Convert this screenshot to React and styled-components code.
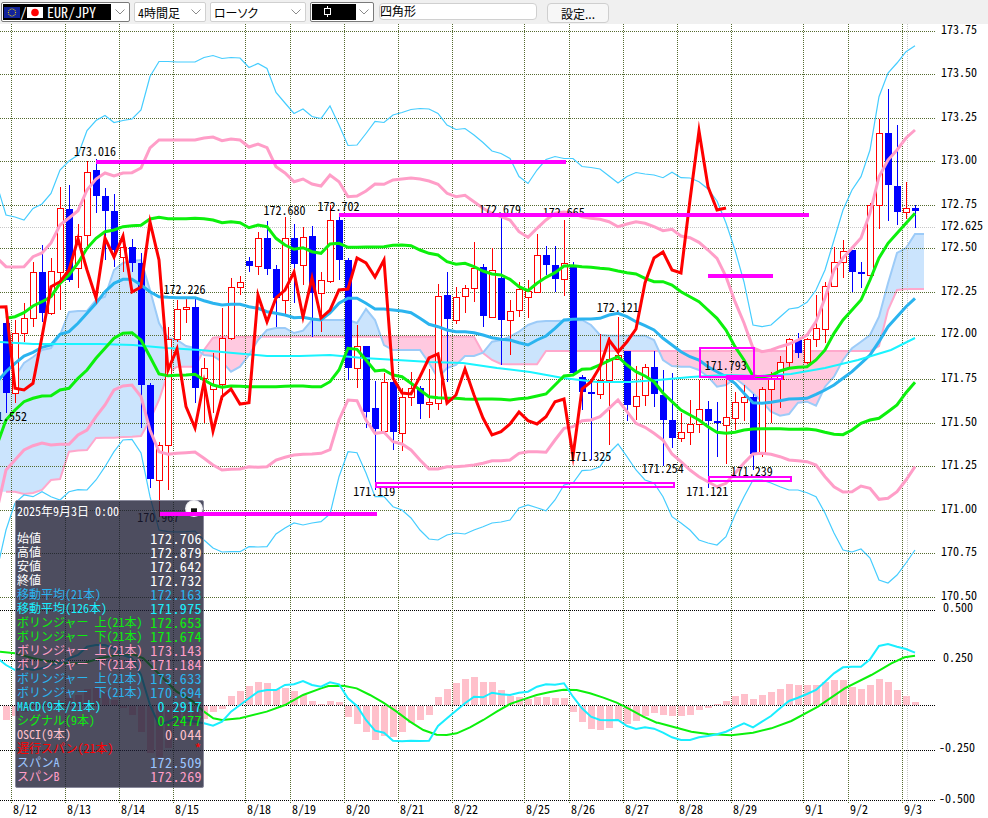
import React from 'react';
import styled, { createGlobalStyle } from 'styled-components';

const GOTHIC = `"Noto Sans CJK JP", "Liberation Sans", sans-serif`;

const Global = createGlobalStyle`
  html, body { margin: 0; padding: 0; background: #fff; }
  body { font-family: ${GOTHIC}; font-feature-settings: "hwid"; overflow: hidden; }
`;

const Page = styled.div`
  width: 988px; height: 818px; display: flex; flex-direction: column; background: #fff; overflow: hidden;
`;
const Toolbar = styled.div`
  height: 24px; flex: none; background: #f0f0f0; display: flex; align-items: flex-start;
  padding: 2px 0 0 1px; box-sizing: border-box; gap: 4px;
`;
const Select = styled.div`
  width: ${p => p.$w}px; height: 20px; box-sizing: border-box; background: #fff;
  border: 1px solid ${p => (p.$dark ? '#7a7a7a' : '#d0d0d0')}; border-radius: 2px;
  display: flex; align-items: center; padding: 1px 0 1px ${p => (p.$dark ? 1 : 3)}px; font-size: 12px; color: #000; position: relative;
  font-feature-settings: ${p => (p.$palt ? '"palt"' : '"hwid"')};
`;
const DarkBox = styled.div`
  width: ${p => p.$w}px; height: 16px; background: #000; color: #fff; display: flex; align-items: center; flex: none;
`;
const Chevron = styled.svg`
  position: absolute; right: 4px; top: 6px; width: 10px; height: 6px;
`;
const PairText = styled.span`
  font-size: 14px; line-height: 16px; margin-left: 4px; letter-spacing: 0;
`;
const Slash = styled.span`
  font-size: 13px; line-height: 16px; width: 7px; text-align: center;
`;
const Flag = styled.svg`
  width: 16px; height: 11px; margin-left: ${p => p.$ml || 0}px; flex: none;
`;
const ToolInput = styled.div`
  width: 158px; height: 17px; margin: 1px 0 0 1px; box-sizing: border-box; background: #fff; border: 1px solid #d0d0d0;
  border-radius: 4px; font-size: 12px; line-height: 14px; padding-left: 0; color: #000;
`;
const ToolButton = styled.div`
  width: 62px; height: 20px; margin: 1px 0 0 6px; box-sizing: border-box; background: #f7f7f7; border: 1px solid #cfcfcf;
  border-radius: 4px; font-size: 12px; line-height: 20px; text-align: center; color: #000; font-feature-settings: "palt";
`;
const ChartArea = styled.div`
  position: relative; flex: 1;
`;
const ChartSvg = styled.svg`
  display: block; width: 988px; height: 794px; overflow: visible;
`;
const ObjectSvg = styled.svg`
  position: absolute; left: 0; top: 0; width: 988px; height: 794px; pointer-events: none;
`;
const ChartLabel = styled.text`
  font-family: ${GOTHIC}; font-size: 12px; font-feature-settings: "hwid"; fill: #000; dominant-baseline: central;
`;
const InfoPanel = styled.div`
  position: absolute; left: 15px; top: 476px; width: 189px; height: 288px; box-sizing: border-box;
  background: rgba(27, 27, 50, 0.78); border: 1px solid #8a8a9c; border-radius: 2px; padding: 3px 1px 0 1px;
  display: flex; flex-direction: column; color: #fff;
`;
const DateRow = styled.div`
  height: 14px; line-height: 14px; font-size: 12px; margin-bottom: 13px; white-space: pre;
`;
const InfoRow = styled.div`
  height: 14px; display: flex; justify-content: space-between; align-items: center; color: ${p => p.$c}; white-space: pre;
`;
const InfoName = styled.span`
  font-size: 12px; line-height: 14px;
`;
const InfoValue = styled.span`
  font-size: 14px; line-height: 14px; letter-spacing: 0.4px; color: ${p => p.$c || 'inherit'};
`;
const CloseButton = styled.div`
  position: absolute; right: 0px; top: -1px; width: 18px; height: 17px; border-radius: 50%;
  background: radial-gradient(circle, #ffffff 55%, #d8d8e4 80%, #8a8a9c 100%);
  display: flex; align-items: flex-end; justify-content: center;
`;
const CloseDash = styled.div`
  width: 6px; height: 3px; background: #111; margin-bottom: 5px; box-shadow: 0 -1px 0 #555;
`;

const X = i => 6 + 9 * i;

const upper3 = [215,217,220,208.5,204,193.5,170,161,155,130.5,120.5,115.5,122.5,120.5,119,110,76.5,61.5,61.5,62,62,62,57.5,55.5,58.5,57.5,58,67.5,63.5,68.5,92.5,103,113.5,109,116.5,118.5,106,125,145.5,145,133.5,121.5,122.5,115,112.5,109.5,108.5,109,113.5,125,129.5,128.5,135,142.5,151,153.5,158.5,176.5,183.5,170,159.5,156.5,158.5,158.5,166.5,167.5,169,176,183,176.5,172.5,174,175,177.7,172.3,177.7,178,181.7,189,201,223,250,282,325,326.7,325,317,309,307.7,302.3,290,270,240,210,190,176.7,150,96.7,73,63,51.7,45.7];
const lower3 = [530,503,495,496.7,491.7,496.7,500,491.7,489.7,490,480,466.7,451.7,440,439.3,453,496.7,530,531.7,532,531.7,531,540,548,552,551.7,551.7,546.7,547,546.7,534,528,523,525,523,521.7,514,476.7,451.7,452.7,473,496.7,496.7,506.7,510,518,530,539,540,535,533,534,530,526.7,523,522,520,508,505,507.7,510.7,500,485,483,470.7,470,466.7,453,444,456.7,470,480,483,496.7,516.7,523,530,540,543,545,536.7,515,496.7,480,480,483,486.7,490,490,492.7,496.7,513,533,550,552,549,558,580,583,575,563,550];
const upper2 = [266.7,267,266.7,256.7,253,243,225,218,210.7,190,179,173,176,173,172.7,168,148,140,140,140,140,140,138,137,140.7,139,140,147,144,147.7,166.7,173,181.7,179,184,186,175,181.7,196.7,196,191,184,184.3,180,179,178,179,181,184.3,193.3,196.7,195.3,201.7,208.3,213.3,216.7,220,231.7,237.3,228.3,220,213.3,212,213.3,216.7,218.3,219.3,221.7,226.7,224,221.7,223.3,226.7,230.7,229.3,236,237.7,242.3,250,258.3,276.7,301.7,323,348,351.7,350,346.7,344,340,335,321.7,298,270,258,248,238,213,176.7,160,150,138,130];
const lower2 = [470,460,450,445.7,443,445,444.3,444.3,435,430,416.7,405,390,386,385,396.7,430,451.7,454.3,453.3,452.7,452,458.3,465,470,469.3,469,466.7,467.3,466.7,460,457.3,455,454.3,454,453.3,449.7,420,400,400.7,420,433.3,432.3,441.7,444,450,460,469,469,466.7,466.7,466,465,463.3,460.7,460.7,460,453.3,451.7,451.7,452.3,440,428.3,426.7,420.7,420,416.7,408.3,400,411.7,423.3,427.3,433.3,440,454,461.7,470,476.7,481.7,486.7,483.3,473.3,463,454,453.3,454.3,456.7,460,460.7,461.7,465,476.7,486.7,492,491.7,486,488.3,499.3,498.3,491.7,480,466.7];
const upper1 = [318.3,316.7,312.7,306,301.7,296.7,283.3,275,263,248.3,238.3,231.7,230,226.7,225.7,225.3,219,217.3,218.7,218.7,218.7,218.3,218.7,220,222.7,221.7,222.7,227.7,225,226.7,238.3,245,249.3,247.7,251.7,253.3,244,243.3,247.3,247.3,247,247,246.7,245.3,245,245.7,250,253.3,255,261.7,264.3,263.3,266.7,271,274,275,279.3,286.7,290.7,283.3,277.3,272.7,266,265.7,266.7,267.3,268.3,269,271,272.7,274,278.3,281.7,281.7,285,291.7,296.7,301.7,310,318.3,330,346.7,360,376,377,375.5,371,368.3,367.3,366.7,360,350,333.3,320,310,300,280,258,243.3,233.3,223.3,213.3];
const lower1 = [420,410,401.7,398.3,396,395.7,390,388.3,378.3,370,358.3,348.3,338.3,333.3,332.7,340,356.7,374,375.7,375.3,375,374.3,380,385,387.3,386,386.3,386.7,386.7,386.7,386.7,386.3,386,386,386.7,386.7,381.7,370,348.3,349.3,360,371,370,375,376.7,383.3,390,396.7,397.7,398.3,398.3,399,399.3,399,399,399.3,400,398.7,398,396,394,385,376,375,369.3,368.7,365,360.7,356.7,365,371.7,376,381.7,393,401.7,410,415,420,426.7,432.3,433.3,432.3,430,429,428.7,428.7,428.7,429.3,429.3,429,430,432.3,434.3,434.7,430,423.3,420,418.3,411.7,405,392.7,382.3];
const ma21 = [371.7,363.3,356,352.3,347.3,345,334.3,331.7,323.3,313.3,303.3,291.7,283.3,279.3,279.3,285,291.7,296.7,297.3,297.7,297.7,297.7,300.7,303.3,305,304.3,304.3,306.7,308.3,311.7,313.3,315,317.7,317.3,319,320,313,303.3,298.3,298.3,303.3,309,309,310,311,312.7,318.3,324.3,326.7,330,331.7,331.7,332.7,335,337.7,339.3,340,342.7,345,340,336,328.3,320,319.3,319,319,318.3,315,313.3,316.7,321.7,325.7,330,338.3,345,351.7,356.7,360,366.7,371.7,376.7,383.3,393.3,402.7,403.3,402.3,400.7,399,398.7,398.3,394.3,390,385,378.3,371.7,363.3,355,341.7,326.7,316.7,306.7,298.3];
const chikou = [306.7,388.3,390,383.3,336.7,286.7,281.7,270,239,270,298,238,257,236,292,287,222,260,370,349,406.7,428,382,431,396.7,389,404,402.7,295,321.7,298,290,272,317,278,318,310,290,289,258,263,277,260,378,393,394,376.7,358,354,403,395,369,395,418,435,431.7,424,412,420.7,424,416.7,401.7,399,456,389,381.7,366.7,340,352,341.7,329,283,258,252,270,273,200,131,186.7,210,208];
const macd = [665,670,668.3,670,668.3,665,663.3,658.3,655,646.7,645,645,648.3,655,658.3,675,705,725,721.7,718.3,720,721.7,723.3,725.7,721.7,711.7,705,698.3,691.7,690,690,685,684.3,681,685,686.7,682.3,684.3,698.3,706,720,730.7,732.7,740.7,741.3,740.7,741,740.7,726,718.3,710.7,703.3,696.7,697.3,692.7,694.3,695,692.7,691.7,686.7,684.3,684.7,683.3,696.7,708.3,716.7,720,720.3,720,726,729,727.3,728.7,732.7,737.3,740,740,737.3,736,734.3,731.7,727.3,723.3,727.3,721.7,716,708.3,701,697.7,694,690,681.7,673.3,667.3,666.7,666.7,659.3,646,644,646.7,649,652.7];
const osc = [-14,-10,-6,-2,2,4,4,7,10,16,17,13,5,-2,-9,-26,-47,-51,-42,-20,-19,-19,-13,-6,-3,9,14,19,23,22,16,17,14,10,4,1,4,3,-11,-18,-26,-34,-30,-31,-26,-17,-14,-9,8,16,22,26,28,23,23,15,9,8,6,8,8,7,7,-6,-16,-23,-24,-22,-15,-18,-15,-10,-7,-9,-10,-10,-9,-4,-2,1,4,9,11,6,10,13,16,21,20,20,20,23,25,25,18,16,20,26,23,15,9,3];
const spanA = [380,376.7,363,357,350,348,335,312,311,311,300,296.7,270,263,261,260,290,323,338,340,346,348,355,356,361.7,371.7,366.7,355,340,330,328,328,333,330.7,320,320,320,320,320,323,309,320,345,350,350,350,350,363,378,368,365,356,356,352.7,341.7,340,336.7,331.7,325,321.7,321,321,320.7,320.5,320,325,335,335.7,335.7,335.7,335.7,335.7,340,360,366,366.7,366.7,370,376.7,386.7,385,378.3,385,393.3,401.7,411.7,415.7,414,402.7,401.7,405.7,386.7,376.7,360,348.3,341.7,335,316.7,283.3,253,248,234,234];
const spanB = [491.7,491.7,494,493,490,480,479,451.7,450.5,450,438,437.7,437.7,437,436.7,436,420,400,373,366.7,366.7,366.7,350,337.7,...Array(29).fill(336.7),353,360,364,364.3,364.3,364.3,364.3,...Array(37).fill(351),346,310,290,289,289,289];

const ma126Pts = [[0,342],[33,344],[67,344],[100,344],[133,345],[167,348],[200,350],[233,353],[267,356],[300,356],[330,355],[363,358],[397,360],[430,362],[463,363],[497,368],[530,372],[563,378],[597,382],[630,382],[658,380],[691,377],[725,375],[758,376],[791,374],[825,368],[858,360],[891,350],[915,338]];
const z8 = (a) => a.map(([x, y]) => [330 + x / 3, 600 + y / 3]);
const signalPts = [
  ...[[0,470],[45,475],[100,490],[150,500],[200,505],[250,505],[300,490],[350,480],[400,478],[430,490],[480,540],[530,590],[580,620],[612,650],[640,670],[666,675],[720,670],[800,650],[855,630],[909,600],[963,580],[985,573]].map(([x, y]) => [x / 3, 495 + y / 3]),
  ...z8([[0,258],[40,257],[80,265],[120,285],[160,308],[200,335],[240,365],[280,390],[320,404],[350,405],[380,400],[420,382],[460,360],[500,335],[540,312],[580,298],[620,285],[660,276],[700,269],[740,270],[780,280],[820,293],[860,308],[900,328],[940,350],[980,368]]),
  ...[[0,548],[50,562],[100,575],[150,582],[220,586],[285,578],[340,565],[400,543],[480,500],[560,445],[640,405],[700,370],[740,352],[771,347]].map(([x, y]) => [658 + x / 3, 540 + y / 3]),
];

// [high, bodyTop, bodyBottom, low, up?]
const candles = [
  [315,323,392.7,413,0],[320,332.7,393,403,1],[303,318,332.7,341.7,1],[262,272,318,326.7,1],[245,272,313,321.7,0],
  [258,271,313,315,1],[187,208.3,272,310,1],[185,209,280,282,0],[224,236,268,288,1],[161,171.7,235,246.7,1],
  [158.5,170,195.7,213,0],[188,196,210.7,260,0],[194,211,250,267,0],[231.7,246.7,256.7,272,1],[239,247.3,262.7,272,0],
  [253,262.7,385,428,0],[383,385,479.3,488.3,0],[441.7,445,480,517,1],[327.3,339.3,445,490,1],[300,309.3,339.3,341.7,1],
  [298.3,307.3,309.3,322.7,1],[298,306.7,388.3,403,0],[358,368,378,423,1],[353,385,389.3,413,1],[308,337.7,383.3,400,1],
  [278,287.3,338.3,340,1],[276,282.3,287.3,295,1],[256.7,261,265.7,272,0],[232.3,238.3,266.7,275,1],[221,238,269.3,275,0],
  [265,269.3,298.3,326.7,0],[217.3,238.3,300,316,1],[224,238.3,264.3,303,0],[227.3,236.7,264.3,285,1],[226,236,293.3,336.7,0],
  [272,280,293.3,331.7,1],[205,220,281,283,1],[213.5,220,260,280,0],[258,260,367.7,380,0],[325,346,368.3,388.3,1],
  [346,346,411.7,428,0],[381,408.3,429.3,490,0],[373,381.7,430.7,431.7,1],[376,381.7,432.3,450,0],[388,397.3,433.3,450.7,1],
  [371.7,388.3,397.3,406,1],[386,388.3,404,419,0],[369,402.3,404.3,417.7,1],[284,295.7,402.3,410,1],[271.7,295,319,381.7,0],
  [286.7,296.7,319.3,324,1],[285,288.3,296.7,313.3,1],[242.3,268,288.3,301.7,1],[264,266.7,315.7,326.7,0],[248,270,316.7,318,1],
  [217.5,278.3,320,365,0],[300,310.7,320,355,1],[282,289.3,310,317,1],[280,291,297.3,318,1],[234,255,292,292.5,1],
  [246,255,265,275,0],[246,265,279,291.7,0],[220,263.3,279.7,296,1],[262,266,373,375,0],[375,376.7,391.7,410,0],
  [381,392,393,460,0],[334,380,394,399,1],[337,359.3,380,445,1],[316.7,355,359.3,360,1],[351,351,405,421,0],
  [366,395.7,405.7,420,1],[364.3,367.3,395.7,406,1],[351,367.3,394.3,407.3,0],[370,395,420,466,0],[373,420,438.3,447.7,0],
  [413,432.3,438.3,442,1],[400,424,432.3,445,1],[380,409.3,424,433,1],[401,409.3,420.7,488.3,0],[402.3,421,423.3,456.7,0],
  [375,417.3,425.7,464,1],[392.3,401.7,417.3,430,1],[385,396.7,401.7,420.7,1],[394,397.3,454,470,0],[386.7,389.3,454,457,1],
  [372.3,378.3,389.3,422.7,1],[356,361.7,378.3,408,1],[338,339,361.7,367.3,1],[333.3,340,353.3,357.7,0],[338,339.3,362.3,364.3,1],
  [295,328.3,339.3,347.3,1],[282.3,285.7,328.3,343.3,1],[247.3,261.7,285.7,286,1],[240,250.7,261.7,278.3,1],[250,250,272,291.7,0],
  [262,272,274,288,0],[203,205,275,278,1],[119,133.3,205,229.3,1],[89,133.3,185.3,220.7,0],[125,186,211.7,225,0],
  [182.3,208.3,212.3,219,1],[205,208.3,210.7,227.7,0],
];

const vLines = [11,65,119,173,245,290,344,398,452,524,569,623,677,731,803,848,902];
const hMain = [31,74,118,161,205,248,292,335,379,423,466,510,553,597];
const hSub = [610,660,705,750,800];
const dates = [['8/12',0],['8/13',1],['8/14',2],['8/15',3],['8/18',4],['8/19',5],['8/20',6],['8/21',7],['8/22',8],['8/25',9],['8/26',10],['8/27',11],['8/28',12],['8/29',13],['9/1',14],['9/2',15],['9/3',16]];
const priceLabels = [['173.75',30],['173.50',72.7],['173.25',116.7],['173.00',160],['172.75',204],['172.625',225.7],['172.50',246.7],['172.25',290.7],['172.00',333],['171.75',377.7],['171.50',421.7],['171.25',465],['171.00',508.7],['170.75',551.7],['170.50',595.7]];
const subLabels = [['0.500',943,608],['0.250',943,658],['-0.250',939,748.3],['-0.500',939,798.7]];
const marks = [['173.016',74,152],['172.680',263.5,211],['172.702',317.5,206.5],['172.679',479,210],['172.665',542.7,213],['172.226',163.5,290],['171.552',-15,416.7],['170.967',137.3,518],['171.119',353.3,492],['171.325',569.3,456.7],['172.121',596.7,307.7],['171.254',641.7,469],['171.121',686.3,492],['171.239',730.7,471.7],['171.793',704.7,365.7]];

const LABEL_SHIFT = -1.5;

const path = (arr, lead) => {
  const p = arr.map((y, i) => `${X(i)},${y}`);
  return (lead != null ? `M-3,${lead} L` : 'M') + p.join(' L');
};
const ptsPath = pts => 'M' + pts.map(p => p.join(',')).join(' L');

function cloudRuns() {
  const runs = [];
  let cur = null;
  const push = (x, a, b, blue) => {
    if (!cur || cur.blue !== blue) {
      if (cur) runs.push(cur);
      cur = { blue, top: cur ? [cur.top[cur.top.length - 1]] : [], bottom: cur ? [cur.bottom[cur.bottom.length - 1]] : [] };
    }
    cur.top.push([x, a]);
    cur.bottom.push([x, b]);
  };
  for (let i = 0; i < spanA.length; i++) {
    const a = spanA[i], b = spanB[i];
    const blue = a <= b;
    if (i > 0) {
      const pa = spanA[i - 1], pb = spanB[i - 1];
      if ((pa <= pb) !== blue) {
        const t = (pb - pa) / (a - pa - b + pb);
        const xc = X(i - 1) + 9 * t, yc = pa + (a - pa) * t;
        push(xc, yc, yc, pa <= pb);
      }
    } else {
      push(0, a, b, blue);
    }
    push(X(i), a, b, blue);
  }
  runs.push(cur);
  return runs;
}

const InfoData = [
  ['始値', '172.706', '#fff'],
  ['高値', '172.879', '#fff'],
  ['安値', '172.642', '#fff'],
  ['終値', '172.732', '#fff'],
  ['移動平均(21本)', '172.163', '#2bb4ef'],
  ['移動平均(126本)', '171.975', '#19f0ff'],
  ['ボリンジャー 上(21本)', '172.653', '#0cf00c'],
  ['ボリンジャー 下(21本)', '171.674', '#0cf00c'],
  ['ボリンジャー 上(21本)', '173.143', '#ff9ec8'],
  ['ボリンジャー 下(21本)', '171.184', '#ff9ec8'],
  ['ボリンジャー 上(21本)', '173.633', '#2bb4ef'],
  ['ボリンジャー 下(21本)', '170.694', '#2bb4ef'],
  ['MACD(9本/21本)', '0.2917', '#19f0ff'],
  ['シグナル(9本)', '0.2477', '#0cf00c'],
  ['OSCI(9本)', '0.044', '#ffc0cb'],
  ['遅行スパン(21本)', '*', '#ff0000'],
  ['スパンA', '172.509', '#9cc6ff'],
  ['スパンB', '172.269', '#ff9ec8'],
];

const ChevronIcon = () => (
  <Chevron viewBox="0 0 10 6"><path d="M0.5 0.5 L5 5 L9.5 0.5" fill="none" stroke="#8a8a8a" strokeWidth="1" /></Chevron>
);
const EuFlag = () => (
  <Flag viewBox="0 0 16 11" $ml={1}>
    <rect width="16" height="11" fill="#12239a" />
    {Array.from({ length: 12 }, (_, k) => {
      const a = (k * Math.PI) / 6;
      return <rect key={k} x={7.5 + 3.6 * Math.cos(a)} y={5 + 3.6 * Math.sin(a)} width="1" height="1" fill="#f2d90a" />;
    })}
  </Flag>
);
const JpFlag = () => (
  <Flag viewBox="0 0 16 11">
    <rect width="16" height="11" fill="#fff" />
    <circle cx="8" cy="5.5" r="3.8" fill="#f00" />
  </Flag>
);
const CandleGlyph = () => (
  <svg width="44" height="16" viewBox="0 0 44 16">
    <path d="M15.5 2 V13" stroke="#fff" strokeWidth="1" shapeRendering="crispEdges" />
    <rect x="12.5" y="4.5" width="6" height="6" fill="#000" stroke="#fff" strokeWidth="1" shapeRendering="crispEdges" />
  </svg>
);

const Line = ({ d, c, w }) => <path d={d} fill="none" stroke={c} strokeWidth={w} strokeLinejoin="miter" strokeMiterlimit="8" />;

function Chart() {
  const runs = cloudRuns();
  return (
    <ChartSvg viewBox="0 24 988 794">
      {runs.map((r, k) => (
        <polygon
          key={k}
          points={[...r.top, ...[...r.bottom].reverse()].map(p => p.join(',')).join(' ')}
          fill={r.blue ? '#cbe4fd' : '#ffc9e0'}
        />
      ))}
      <Line d={ptsPath(spanB.map((y, i) => [X(i), y]))} c="#ffa8cc" w={2} />
      <Line d={ptsPath(spanA.map((y, i) => [X(i), y]))} c="#9ccbf8" w={2} />

      <g shapeRendering="crispEdges">
        {hMain.map(y => <line key={y} x1="0" x2="936" y1={y + 0.5} y2={y + 0.5} stroke="#556b2f" strokeDasharray="1 1" />)}
        {hSub.map(y => <line key={y} x1="0" x2="936" y1={y + 0.5} y2={y + 0.5} stroke="#000" strokeDasharray="1 1" />)}
        {vLines.map(x => <line key={x} x1={x + 0.5} x2={x + 0.5} y1="24" y2="803" stroke="#556b2f" strokeDasharray="1 1" />)}
        <line x1="907.5" x2="907.5" y1="24" y2="803" stroke="#c8c8c8" strokeDasharray="1 1" />
        <line x1="0" x2="936" y1="227.5" y2="227.5" stroke="#c8c8c8" strokeDasharray="1 1" />
        {osc.map((h, i) => (
          <rect key={i} x={X(i) - 3} width="7" y={h >= 0 ? 705 - h : 706} height={Math.abs(h)} fill="#ffc0cb" />
        ))}
        {candles.map(([hi, top, bot, lo, up], i) => (
          <g key={i}>
            <rect x={X(i)} width="1" y={hi} height={lo - hi} fill={up ? '#f00' : '#00f'} />
            {up
              ? <rect x={X(i) - 2.5} width="6" y={Math.round(top) + 0.5} height={Math.max(Math.round(bot - top), 1)} fill="#fff" stroke="#f00" strokeWidth="1" />
              : <rect x={X(i) - 3} width="7" y={top} height={Math.max(bot - top, 2)} fill="#00f" />}
          </g>
        ))}
      </g>

      <Line d={path(ma21, 382)} c="#2bb4ef" w={3} />
      <Line d={ptsPath(ma126Pts)} c="#19f4ff" w={2} />
      <Line d={path(upper1)} c="#0cf00c" w={3} />
      <Line d={path(lower1, 445)} c="#0cf00c" w={3} />
      <Line d={path(upper2, 258)} c="#ff9ec8" w={3} />
      <Line d={path(lower2, 510)} c="#ff9ec8" w={3} />
      <Line d={path(upper3, 185)} c="#45cdff" w={1.2} />
      <Line d={path(lower3, 570)} c="#45cdff" w={1.2} />
      <Line d={path(chikou, 307)} c="#f00" w={3} />
      <Line d={ptsPath(signalPts)} c="#0cf00c" w={2} />
      <Line d={path(macd, 658)} c="#19eeff" w={2} />

      {marks.map(([t, x, y]) => <ChartLabel key={t + x} x={x} y={y + LABEL_SHIFT}>{t}</ChartLabel>)}
      {priceLabels.map(([t, y]) => <ChartLabel key={t} x="941" y={y + LABEL_SHIFT}>{t}</ChartLabel>)}
      {subLabels.map(([t, x, y]) => <ChartLabel key={t} x={x} y={y + LABEL_SHIFT}>{t}</ChartLabel>)}
      {dates.map(([t, k]) => <ChartLabel key={t} x={vLines[k] + 2} y={810 + LABEL_SHIFT}>{t}</ChartLabel>)}
    </ChartSvg>
  );
}

function Objects() {
  const solid = [[96, 160, 470, 4], [339, 213.3, 470, 3.7], [160, 512, 217, 4], [708, 274.3, 65, 3.4]];
  const boxes = [[375.5, 482.5, 298, 4], [700, 347.5, 54, 29.5], [727, 376, 55, 3], [708.5, 477, 82, 3.5]];
  return (
    <ObjectSvg viewBox="0 24 988 794" shapeRendering="crispEdges">
      {solid.map(([x, y, w, h]) => <rect key={x} x={x} y={y} width={w} height={h} fill="#f0f" />)}
      {boxes.map(([x, y, w, h]) => <rect key={x} x={x} y={y} width={w} height={h} fill="none" stroke="#f0f" strokeWidth="2" />)}
    </ObjectSvg>
  );
}

export default function App() {
  return (
    <Page>
      <Global />
      <Toolbar>
        <Select $w={129} $dark>
          <DarkBox $w={108}>
            <EuFlag />
            <Slash>/</Slash>
            <JpFlag />
            <PairText>EUR/JPY</PairText>
          </DarkBox>
          <ChevronIcon />
        </Select>
        <Select $w={72}>4時間足<ChevronIcon /></Select>
        <Select $w={96} $palt>ローソク<ChevronIcon /></Select>
        <Select $w={64} $dark>
          <DarkBox $w={44}><CandleGlyph /></DarkBox>
          <ChevronIcon />
        </Select>
        <ToolInput>四角形</ToolInput>
        <ToolButton>設定...</ToolButton>
      </Toolbar>
      <ChartArea>
        <Chart />
        <InfoPanel>
          <DateRow>2025年9月3日 0:00</DateRow>
          <CloseButton><CloseDash /></CloseButton>
          {InfoData.map(([n, v, c], i) => (
            <InfoRow key={i} $c={c}>
              <InfoName>{n}</InfoName>
              <InfoValue>{v}</InfoValue>
            </InfoRow>
          ))}
        </InfoPanel>
        <Objects />
      </ChartArea>
    </Page>
  );
}
